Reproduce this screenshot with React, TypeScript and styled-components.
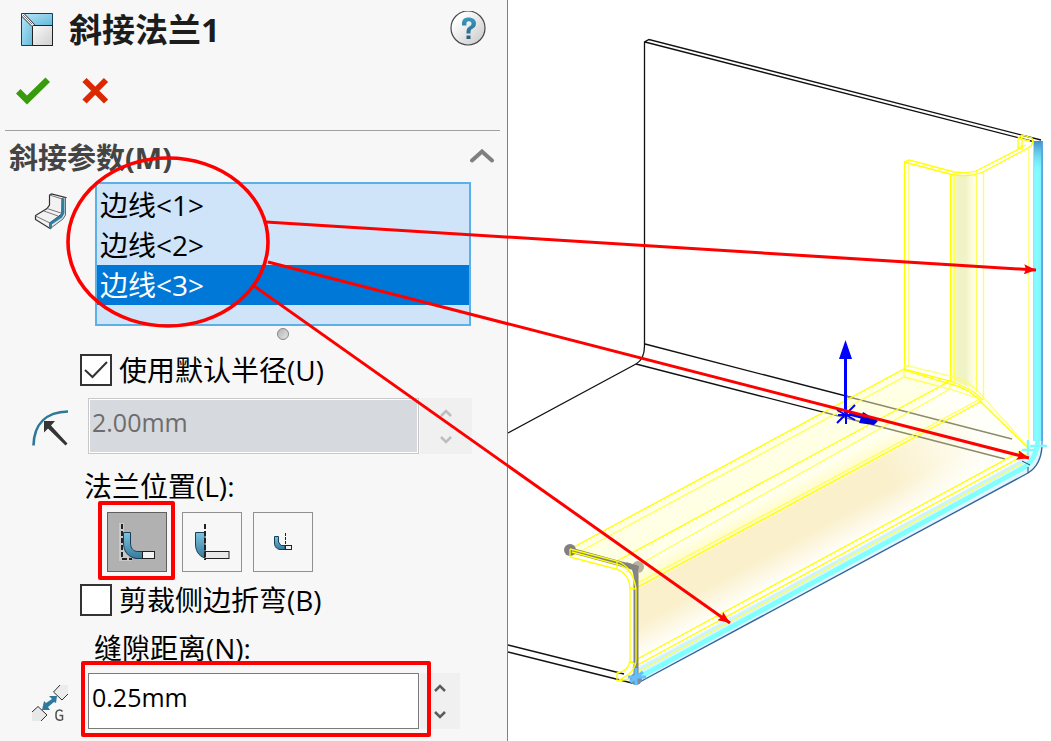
import React, { useState } from "react";
import styled, { createGlobalStyle } from "styled-components";

const GlobalStyle = createGlobalStyle`
  * { box-sizing: border-box; }
  body {
    margin: 0;
    background: #fff;
    color: #000;
    font-family: "Open Sans", "Noto Sans CJK SC", sans-serif;
    font-size: 28px;
    line-height: 40px;
  }
  button, input { font: inherit; color: inherit; }
`;

const Workspace = styled.main`
  position: relative;
  display: flex;
  min-height: 100vh;
  overflow: hidden;
`;

const PropertyPanel = styled.aside`
  flex: none;
  width: 508px;
  padding: 8px 7px 4px 5px;
  background: #f7f7f7;
  border-right: 1px solid #808080;
`;

const TitleBar = styled.header`
  display: flex;
  align-items: center;
  height: 42px;
  padding: 0 14px 0 15px;
`;

const Title = styled.h1`
  flex: 1;
  margin: 0 0 0 15px;
  padding-top: 2px;
  color: #1c1c1c;
  font-size: 33px;
  font-weight: 700;
  line-height: 40px;
`;

const IconButton = styled.button`
  display: grid;
  place-items: center;
  padding: 0;
  border: 0;
  background: none;
`;

const ActionBar = styled.div`
  display: flex;
  gap: 30px;
  margin-top: 26px;
  padding: 0 10px 24px;
  border-bottom: 1px solid #a0a0a0;
`;

const SectionHeader = styled.div`
  display: flex;
  align-items: center;
  justify-content: space-between;
  height: 40px;
  margin: 7px 0 4px;
  padding: 0 5px 0 4px;
`;

const SectionTitle = styled.h2`
  margin: 0;
  color: #444;
  font-size: 29px;
  font-weight: 700;
  line-height: 40px;
`;

const ListRow = styled.div`
  display: flex;
  padding-right: 29px;
`;

const ListIcon = styled.div`
  flex: none;
  width: 90px;
  padding: 11px 0 0 29px;
  line-height: 0;
`;

const EdgeList = styled.ul`
  flex: 1;
  height: 144px;
  margin: 0;
  padding: 1px 0 0;
  list-style: none;
  background: #cfe4f8;
  border: 2px solid #5cb0e8;
`;

const EdgeItem = styled.li<{ $selected: boolean }>`
  padding-left: 3px;
  color: ${(p) => (p.$selected ? "#fff" : "#000")};
  background: ${(p) => (p.$selected ? "#0078d7" : "transparent")};
`;

const ResizeGrip = styled.div`
  width: 12px;
  height: 12px;
  margin: 2px 0 14px 272px;
  border: 1px solid #858585;
  border-radius: 50%;
  background: linear-gradient(135deg, #b4b4b4, #e4e4e4);
`;

const CheckLabel = styled.label`
  display: flex;
  align-items: center;
  gap: 7px;
  height: 32px;
  padding-left: 75px;
  line-height: 32px;
`;

const CheckCell = styled.span`
  display: grid;
  width: 32px;
  height: 32px;
  > * { grid-area: 1 / 1; }
  > svg { pointer-events: none; }
`;

const CheckInput = styled.input`
  appearance: none;
  width: 32px;
  height: 32px;
  margin: 0;
  border: 2px solid #333;
  background: #fff;
`;

const FieldRow = styled.div<{ $space: number }>`
  position: relative;
  display: flex;
  height: 56px;
  margin-top: ${(p) => p.$space}px;
`;

const FieldIcon = styled.div`
  flex: none;
  width: 83px;
  padding: 12px 0 0 27px;
  line-height: 0;
`;

const ValueInput = styled.input`
  width: 331px;
  height: 56px;
  padding: 0 4px 8px 3px;
  border: 1px solid #7a7a7a;
  border-radius: 0;
  background: #fff;
  font-size: 25px;
  &:disabled {
    border-color: #c8c8c8;
    color: #6d6d6d;
    background: #d6d9de;
    box-shadow: inset 0 0 0 1px #fff;
  }
`;

const Spinner = styled.div<{ $width: number }>`
  display: grid;
  grid-template-rows: 27px 27px;
  align-content: center;
  width: ${(p) => p.$width}px;
  margin-left: 1px;
  background: #f0f0f0;
`;

const GroupLabel = styled.div<{ $inset: number }>`
  display: block;
  height: 40px;
  margin-top: 12px;
  padding-left: ${(p) => p.$inset}px;
`;

const PositionGroup = styled.div`
  display: flex;
  gap: 11px;
  margin: 6px 0 12px 102px;
`;

const PositionItem = styled.div`
  position: relative;
  &:first-child { margin-right: 4px; }
`;

const PositionButton = styled.button`
  display: grid;
  place-items: center;
  width: 60px;
  height: 60px;
  padding: 0;
  border: 1px solid #909090;
  background: #f7f7f7;
  &[aria-pressed="true"] {
    border-color: #606060;
    background: #b1b1b1;
  }
`;

const Callout = styled.span<{ $inset: string }>`
  position: absolute;
  inset: ${(p) => p.$inset};
  border: 4px solid #f00;
  border-radius: 2px;
  pointer-events: none;
`;

const Viewport = styled.section`
  flex: 1;
  min-width: 0;
  line-height: 0;
`;

const ModelDrawing = styled.svg`
  display: block;
  width: 100%;
  height: 100%;
`;

const Markup = styled.svg`
  position: absolute;
  top: 0;
  left: 0;
  pointer-events: none;
`;

const MiterIcon = () => (
  <svg width="34" height="34" viewBox="0 0 34 34" aria-hidden="true">
    <defs>
      <linearGradient id="mi" x1="0" y1="0" x2="1" y2="1">
        <stop offset="0" stopColor="#b8e6f8" />
        <stop offset="1" stopColor="#62b8d8" />
      </linearGradient>
      <linearGradient id="mg" x1="0" y1="0" x2="1" y2="1">
        <stop offset="0" stopColor="#fafafa" />
        <stop offset="1" stopColor="#cfcfcf" />
      </linearGradient>
    </defs>
    <path d="M3.5 1.5H32.500V13.500H14.500Z" fill="url(#mi)" stroke="#123e5c" />
    <path d="M1.500 3.500L12.500 14.500V33.500H1.500Z" fill="url(#mi)" stroke="#123e5c" />
    <rect x="12.500" y="13.500" width="20" height="20" fill="url(#mg)" stroke="#222" />
    <path d="M1.500 1.500H4L14.500 12.500L12 14.500L1.500 4Z" fill="#eef6fa" stroke="#333" />
    <path d="M3 3L12 12" stroke="#777" fill="none" />
  </svg>
);

const HelpIcon = () => (
  <svg width="36" height="36" viewBox="0 0 36 36" aria-hidden="true">
    <defs>
      <linearGradient id="hg" x1="0" y1="0" x2="1" y2="1">
        <stop offset=".2" stopColor="#fff" />
        <stop offset="1" stopColor="#c6c6c6" />
      </linearGradient>
      <linearGradient id="hq" x1="0" y1="0" x2="0" y2="1">
        <stop offset="0" stopColor="#3a9ac2" />
        <stop offset="1" stopColor="#265e80" />
      </linearGradient>
    </defs>
    <circle cx="18" cy="17" r="17" fill="url(#hg)" stroke="#484848" strokeWidth="1.200" />
    <path
      d="M12 14.500V12.500C12 8.500 14.500 6.500 18.500 6.500C23 6.500 26 8.800 26 12.300C26 15.500 24.500 16.700 22.500 17.700C21 18.500 20.500 19 20.500 22.500H16.500C16.500 17.500 17.300 16.600 19.500 15.400C21 14.600 21.500 14 21.500 12.600C21.500 11 20.500 10.300 18.800 10.300C17 10.300 16.400 11.300 16.400 12.800V14.500ZM16.500 24.500H20.500V28H16.500Z"
      fill="url(#hq)"
    />
  </svg>
);

const AcceptIcon = () => (
  <svg width="36" height="30" viewBox="0 0 36 30" aria-hidden="true">
    <path d="M1 17.500L5.500 13L12 19.500L30.500 1.500L35 6L12 28.500Z" fill="#389b0c" />
  </svg>
);

const CancelIcon = () => (
  <svg width="30" height="30" viewBox="0 0 30 30" aria-hidden="true">
    <path d="M3.500 4L25 25.500M25 4L3.500 25.500" stroke="#dc2800" strokeWidth="6" fill="none" />
  </svg>
);

const EdgeIcon = () => (
  <svg width="33" height="37" viewBox="0 0 33 37" aria-hidden="true">
    <path d="M15.500 2L17.500 1L31.500 4.500L28.500 6L28 21L16 30V35.500L1.500 26.500V22.500L13 15.500L15.500 12Z" fill="#f2f2f2" stroke="#303030" strokeWidth="1.200" />
    <path d="M15.500 2L28.500 6M1.500 23L16 30M13 15.500L27 20M10 18L24 23" stroke="#777" fill="none" />
    <path d="M28 5.500L31.500 4.500V22L29 26L17 35L15.500 35.500V30.500L27 23L28 20Z" fill="#d7e6ed" stroke="#444" strokeWidth=".8" />
    <path d="M29 6V20L27 23.500L16.500 30.500V35.500" stroke="#2f7c9e" strokeWidth="2.800" fill="none" />
  </svg>
);

const RadiusIcon = () => (
  <svg width="37" height="37" viewBox="0 0 37 37" aria-hidden="true">
    <path d="M1.500 35.500C2 14 14 2 36 1.500" fill="none" stroke="#2d7799" strokeWidth="2.600" />
    <path d="M12 11H23L19 15.500L35.500 33.500L33.500 35.500L16 18.500L12 22.500Z" fill="#353535" />
  </svg>
);

const GapIcon = () => (
  <svg width="37" height="37" viewBox="0 0 37 37" aria-hidden="true">
    <path d="M28 0L21.500 7L30 15L36 9V0Z" fill="#ececec" />
    <path d="M28 0L21.500 7L30 15L36 9" fill="none" stroke="#303030" />
    <path d="M0 27L6 21.500L15 30L9 36H0Z" fill="#e8e8e8" />
    <path d="M0 27L6 21.500L15 30L9 36" fill="none" stroke="#303030" />
    <path d="M25 11L24 18L22 17L16 22L18 25L10 25L12 16L14 18L20 14L17 11Z" fill="#2d7a9e" />
    <path d="M30.500 26.500C29 24.500 24 24 24 29V31.500C24 36 29 35.500 30.500 34.500V30.500H27.500" fill="none" stroke="#505050" strokeWidth="1.500" />
  </svg>
);

type FlangePosition = "inside" | "outside" | "offset";

const PositionIcon = ({ kind }: { kind: FlangePosition }) => (
  <svg width="58" height="58" viewBox="0 0 58 58" aria-hidden="true">
    <defs>
      <linearGradient id={`b-${kind}`} x1="0" y1="0" x2="0" y2="1">
        <stop offset="0" stopColor="#7cc4df" />
        <stop offset="1" stopColor="#37799d" />
      </linearGradient>
    </defs>
    {kind === "inside" && (
      <>
        <path d="M11 10H16V38L24 48H11Z" fill="#cfcfcf" opacity=".8" />
        <path d="M14 11V46H24" fill="none" stroke="#222" strokeWidth="2" strokeDasharray="5 2" />
        <path d="M15.500 19.500H22.500V30C22.500 35 25 38.500 30 38.500H34.500V45.500H28C20 44 15.500 38 15.500 30Z" fill={`url(#b-${kind})`} stroke="#163e56" />
        <rect x="34.500" y="38.500" width="12" height="7" fill="#f3f3f3" stroke="#202020" />
      </>
    )}
    {kind === "outside" && (
      <>
        <path d="M12.500 19.500H22V45C15 43 12.500 37 12.500 31Z" fill={`url(#b-${kind})`} stroke="#163e56" />
        <rect x="22" y="38.500" width="24" height="7" fill="#e9e9e9" stroke="#222" />
        <path d="M22 11V47" stroke="#222" strokeWidth="2" strokeDasharray="5 2" />
      </>
    )}
    {kind === "offset" && (
      <>
        <path d="M20.500 23.500H24.500V29L27 32.500H31V36.500H26C22 36 20.500 33 20.500 30Z" fill={`url(#b-${kind})`} stroke="#163e56" />
        <rect x="31.500" y="32.500" width="6" height="4" fill="#f2f2f2" stroke="#222" />
        <path d="M31.500 20V32" stroke="#222" strokeDasharray="3 1" />
      </>
    )}
  </svg>
);

const Chevron = ({ up, color }: { up?: boolean; color: string }) => (
  <svg width="12" height="10" viewBox="0 0 12 10" aria-hidden="true">
    <path d={up ? "M1 8L6 3L11 8" : "M1 2L6 7L11 2"} fill="none" stroke={color} strokeWidth="2.500" />
  </svg>
);

const SpinButtons = ({ width, disabled }: { width: number; disabled?: boolean }) => (
  <Spinner $width={width}>
    <IconButton aria-label="增大" disabled={disabled}>
      <Chevron up color={disabled ? "#bdbdbd" : "#5c5c5c"} />
    </IconButton>
    <IconButton aria-label="减小" disabled={disabled}>
      <Chevron color={disabled ? "#bdbdbd" : "#5c5c5c"} />
    </IconButton>
  </Spinner>
);

const CheckField = ({ label, initial }: { label: string; initial: boolean }) => {
  const [checked, setChecked] = useState(initial);
  return (
    <CheckLabel>
      <CheckCell>
        <CheckInput type="checkbox" checked={checked} onChange={() => setChecked(!checked)} />
        {checked && (
          <svg width="32" height="32" viewBox="0 0 32 32" aria-hidden="true">
            <path d="M5 16L12.500 23L27 8" fill="none" stroke="#333" strokeWidth="2" />
          </svg>
        )}
      </CheckCell>
      {label}
    </CheckLabel>
  );
};

const Model = () => (
  <ModelDrawing viewBox="508 0 543 741" preserveAspectRatio="xMinYMin slice" role="img" aria-label="斜接法兰预览">
    <defs>
      <linearGradient id="flange" gradientUnits="userSpaceOnUse" x1="700" y1="479" x2="765" y2="600">
        <stop offset="0" stopColor="#ffffe6" />
        <stop offset=".26" stopColor="#ffffe4" />
        <stop offset=".34" stopColor="#fffff0" />
        <stop offset=".47" stopColor="#fffcc4" />
        <stop offset=".5" stopColor="#faf0cc" />
        <stop offset=".72" stopColor="#faf0cc" />
        <stop offset=".93" stopColor="#fffef8" />
      </linearGradient>
      <linearGradient id="fade" gradientUnits="userSpaceOnUse" x1="890" y1="480" x2="980" y2="431">
        <stop offset="0" stopColor="#fffff4" stopOpacity="0" />
        <stop offset="1" stopColor="#fffffa" />
      </linearGradient>
      <linearGradient id="bend" x1="0" y1="0" x2="1" y2="0">
        <stop offset="0" stopColor="#f9fbd0" />
        <stop offset=".3" stopColor="#eff3c6" />
        <stop offset=".6" stopColor="#eff3c6" />
        <stop offset=".8" stopColor="#fbfbd9" />
        <stop offset="1" stopColor="#ffffe6" />
      </linearGradient>
      <linearGradient id="strip" gradientUnits="userSpaceOnUse" x1="1033" y1="0" x2="1043" y2="0">
        <stop offset="0" stopColor="#84eaff" />
        <stop offset=".3" stopColor="#86ffff" />
        <stop offset=".8" stopColor="#80f4ff" />
        <stop offset="1" stopColor="#559ddd" />
      </linearGradient>
      <linearGradient id="stripTop" x1="0" y1="0" x2="0" y2="1">
        <stop offset="0" stopColor="#3e8ccb" />
        <stop offset="1" stopColor="#80ffff" stopOpacity="0" />
      </linearGradient>
    </defs>

    <g fill="none" stroke="#111" strokeWidth="1.300">
      <path d="M644.500 344V42L649 39.500L1041 140M645 42L1035 142" />
      <path d="M644.500 344Q645 359 636 364L508 433" />
      <path d="M645 344L1012 439M636 364L1005 459" />
      <path d="M508 645L624 674M508 652L636 684" />
    </g>

    <path d="M570 549L904 369L950 381L983 400L1030 448L1018 459L637 668V588L632 572L617 561Z" fill="url(#flange)" />
    <path d="M880 430L950 381L983 400L1030 448L1018 459L850 551Z" fill="url(#fade)" />
    <path d="M845 396L1012 439M823 412L1005 459" stroke="#8b8b68" strokeWidth="1.300" fill="none" />
    <path d="M636 684L1028 473Q1041 464 1042 446V441L1030 455L636 668Z" fill="#e2f5ff" />
    <path d="M636 672L1024 461" stroke="#baf5f8" strokeWidth="4" opacity=".6" />
    <path d="M636 679L1023 468Q1037 460 1038 438" fill="none" stroke="#80ffff" strokeWidth="5" />
    <rect x="1033" y="141" width="10" height="300" fill="url(#strip)" />
    <rect x="1034" y="141" width="8" height="34" fill="url(#stripTop)" />
    <path d="M636 684L1028 473Q1041 465 1042 446" fill="none" stroke="#33649b" strokeWidth="1.400" />
    <path d="M1042 446V141" fill="none" stroke="#5aa0e0" strokeWidth="1.400" />
    <path d="M1028 467V473M1022 461L1030 465" fill="none" stroke="#304a65" />

    <path d="M954 174Q965 177 976 171V393Q966 383 950 381V174Z" fill="url(#bend)" />
    <g fill="none" stroke="#ff0" strokeWidth="1.300">
      <path d="M904.500 369V162L909 160L954 172Q966 174 976 171L1021 148" />
      <path d="M904 162L950 174Q969 178 983 172L1028 148Q1034 145 1032 138L1022 135L1018 138V148L1026 145" />
      <path d="M1022 135V150M1018 138L1030 141" />
      <path d="M950.500 174V381" />
      <path d="M570 549L904 369L950 381Q972 388 983 400" />
      <path d="M617 561L950 381M636 588L982 401" />
      <path d="M630 663L1025 449M632 668L1028 453" />
      <path d="M904 370L950 384Q970 388 983 404L1030 450" />
    </g>
    <g fill="none" stroke="#ffff58" strokeWidth="1.300">
      <path d="M954.500 172V381M976.500 171V392M983.500 172V400" />
      <path d="M908.500 160V366L954 377Q972 382 985 399L1030 449M1028.500 148V448" opacity=".75" />
      <path d="M572 556L904 377L950 389L980 399M626 572L950 389M632 586L982 398M636 673L1021 464" />
      <path d="M904 369V377M950 381V389M904 366H909" />
    </g>

    <g fill="none" stroke="#808080">
      <path d="M570 550L636 568V680" strokeWidth="5" />
    </g>
    <circle cx="570" cy="550" r="6" fill="#808080" />
    <circle cx="638" cy="567" r="6" fill="#b8b39b" />
    <path d="M626 562L639 566L636 582L632 570Z" fill="#858585" />
    <circle cx="636" cy="679" r="6" fill="#808c99" />
    <g fill="none" stroke="#ff0" strokeWidth="1.300">
      <path d="M570 549V557L616 569Q630 573 630 590V660Q629 671 617 673V681L630 679" />
      <path d="M570 549L617 561Q632 566 636 588V660Q636 673 617 681M617 561V569M630 588L636 589M630 661L636 665M572 552L620 565Q634 571 636 590" />
    </g>
    <path d="M636 668V685M628 677H646M630 682L643 672" stroke="#64bfff" strokeWidth="3" fill="none" />
    <path d="M1028 440V457M1022 450H1036M1030 446H1047" stroke="#80f8ff" strokeWidth="2.500" fill="none" />

    <g stroke="#00f" fill="#00f">
      <path d="M845.500 358V413" strokeWidth="3" />
      <path d="M845.500 340L852 359H839Z" stroke="none" />
      <path d="M837 410L855 420M837 423L855 405M846 403V424M838 415H855" strokeWidth="2" />
      <path d="M849 414L865 418" strokeWidth="3" />
      <path d="M863 412L878 421L874 425L859 423Z" fill="#0000d8" stroke="none" />
    </g>
  </ModelDrawing>
);

const arrows = [
  { from: [266, 222], to: [1036, 270] },
  { from: [268, 262], to: [1029, 458] },
  { from: [254, 286], to: [730, 623] },
];

const Leaders = () => (
  <Markup width="1051" height="741" viewBox="0 0 1051 741" aria-hidden="true">
    <defs>
      <marker id="tip" viewBox="0 0 12 10" refX="12" refY="5" markerWidth="12" markerHeight="10" markerUnits="userSpaceOnUse" orient="auto">
        <path d="M0 0L12 5L0 10L2 5Z" fill="#f00" />
      </marker>
    </defs>
    <ellipse cx="168" cy="242" rx="100" ry="84" fill="none" stroke="#f00" strokeWidth="3.600" />
    {arrows.map(({ from, to }) => (
      <line key={to[0]} x1={from[0]} y1={from[1]} x2={to[0]} y2={to[1]} stroke="#f00" strokeWidth="3" markerEnd="url(#tip)" />
    ))}
  </Markup>
);

const edges = ["边线<1>", "边线<2>", "边线<3>"];
const positions: { kind: FlangePosition; label: string }[] = [
  { kind: "inside", label: "材料在内" },
  { kind: "outside", label: "材料在外" },
  { kind: "offset", label: "折弯在外" },
];

export default function App() {
  const [selectedEdge, setSelectedEdge] = useState(2);
  const [position, setPosition] = useState<FlangePosition>("inside");
  const [gap, setGap] = useState("0.25mm");

  return (
    <Workspace>
      <GlobalStyle />
      <PropertyPanel>
        <TitleBar>
          <MiterIcon />
          <Title>斜接法兰1</Title>
          <IconButton aria-label="帮助"><HelpIcon /></IconButton>
        </TitleBar>
        <ActionBar>
          <IconButton aria-label="确定"><AcceptIcon /></IconButton>
          <IconButton aria-label="取消"><CancelIcon /></IconButton>
        </ActionBar>

        <SectionHeader>
          <SectionTitle>斜接参数(M)</SectionTitle>
          <IconButton aria-label="折叠">
            <svg width="26" height="18" viewBox="0 0 26 18" aria-hidden="true">
              <path d="M3 11.500L13 2.500L23 11.500" fill="none" stroke="#808080" strokeWidth="4" strokeLinecap="round" />
            </svg>
          </IconButton>
        </SectionHeader>

        <ListRow>
          <ListIcon><EdgeIcon /></ListIcon>
          <EdgeList role="listbox" aria-label="沿边线">
            {edges.map((edge, i) => (
              <EdgeItem key={edge} role="option" aria-selected={i === selectedEdge} $selected={i === selectedEdge} onClick={() => setSelectedEdge(i)}>
                {edge}
              </EdgeItem>
            ))}
          </EdgeList>
        </ListRow>
        <ResizeGrip />

        <CheckField label="使用默认半径(U)" initial />
        <FieldRow $space={12}>
          <FieldIcon><RadiusIcon /></FieldIcon>
          <ValueInput aria-label="折弯半径" defaultValue="2.00mm" disabled />
          <SpinButtons width={52} disabled />
        </FieldRow>

        <GroupLabel id="position-label" $inset={79}>法兰位置(L):</GroupLabel>
        <PositionGroup role="group" aria-labelledby="position-label">
          {positions.map(({ kind, label }) => (
            <PositionItem key={kind}>
              <PositionButton aria-label={label} aria-pressed={position === kind} onClick={() => setPosition(kind)}>
                <PositionIcon kind={kind} />
              </PositionButton>
              {kind === "inside" && <Callout $inset="-11px -8px -8px -9px" />}
            </PositionItem>
          ))}
        </PositionGroup>

        <CheckField label="剪裁侧边折弯(B)" initial={false} />
        <GroupLabel as="label" htmlFor="gap" $inset={89}>缝隙距离(N):</GroupLabel>
        <FieldRow $space={5}>
          <FieldIcon><GapIcon /></FieldIcon>
          <ValueInput id="gap" value={gap} onChange={(e) => setGap(e.target.value)} />
          <SpinButtons width={40} />
          <Callout $inset="-12px 69px -8px 76px" />
        </FieldRow>
      </PropertyPanel>
      <Viewport>
        <Model />
      </Viewport>
      <Leaders />
    </Workspace>
  );
}
